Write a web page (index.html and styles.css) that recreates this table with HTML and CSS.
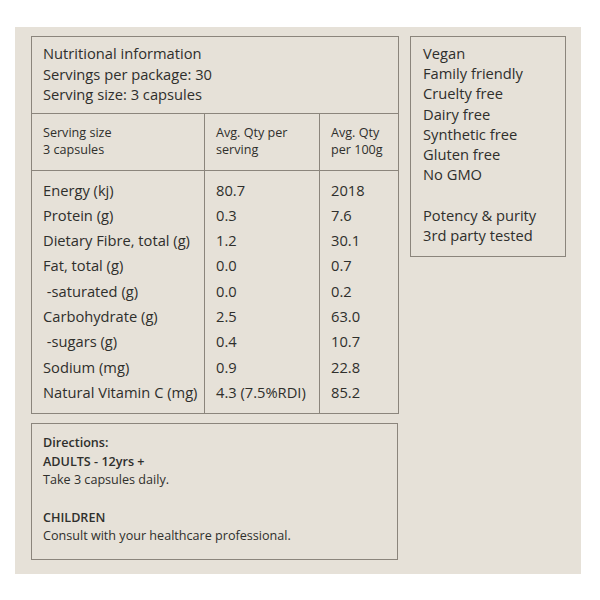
FILE: index.html
```html
<!DOCTYPE html>
<html>
<head>
<meta charset="utf-8">
<link rel="stylesheet" href="styles.css">
</head>
<body>
<div class="panel">
  <div class="top">
    <table class="nutri">
      <colgroup>
        <col class="c1"><col class="c2"><col class="c3">
      </colgroup>
      <tr class="head">
        <td colspan="3">Nutritional information<br>Servings per package: 30<br>Serving size: 3 capsules</td>
      </tr>
      <tr class="sub">
        <td>Serving size<br>3 capsules</td>
        <td>Avg. Qty per<br>serving</td>
        <td>Avg. Qty<br>per 100g</td>
      </tr>
      <tr class="row first"><td>Energy (kj)</td><td>80.7</td><td>2018</td></tr>
      <tr class="row"><td>Protein (g)</td><td>0.3</td><td>7.6</td></tr>
      <tr class="row"><td>Dietary Fibre, total (g)</td><td>1.2</td><td>30.1</td></tr>
      <tr class="row"><td>Fat, total (g)</td><td>0.0</td><td>0.7</td></tr>
      <tr class="row"><td>&nbsp;-saturated (g)</td><td>0.0</td><td>0.2</td></tr>
      <tr class="row"><td>Carbohydrate (g)</td><td>2.5</td><td>63.0</td></tr>
      <tr class="row"><td>&nbsp;-sugars (g)</td><td>0.4</td><td>10.7</td></tr>
      <tr class="row"><td>Sodium (mg)</td><td>0.9</td><td>22.8</td></tr>
      <tr class="row last"><td>Natural Vitamin C (mg)</td><td>4.3 (7.5%RDI)</td><td>85.2</td></tr>
    </table>
    <div class="side">
      <div>Vegan<br>Family friendly<br>Cruelty free<br>Dairy free<br>Synthetic free<br>Gluten free<br>No GMO</div>
      <div class="gapblock">Potency &amp; purity<br>3rd party tested</div>
    </div>
  </div>
  <div class="directions">
    <div class="b">Directions:</div>
    <div class="b">ADULTS - 12yrs +</div>
    <div>Take 3 capsules daily.</div>
    <div class="b spaced">CHILDREN</div>
    <div>Consult with your healthcare professional.</div>
  </div>
</div>
</body>
</html>
```
FILE: styles.css
```css
html, body {
  margin: 0;
  padding: 0;
  background: #ffffff;
}
body {
  font-family: "Open Sans", "Noto Sans", sans-serif;
  color: #2f2f2c;
}
.panel {
  box-sizing: border-box;
  width: 566px;
  margin: 27px 0 0 15px;
  padding: 9px 15px 14px 16px;
  background: #e6e1d8;
}
.top {
  display: flex;
  align-items: flex-start;
  gap: 11px;
}
.nutri {
  width: 367px;
  table-layout: fixed;
  border-collapse: collapse;
  border: 1px solid #8b857c;
}
.c1 { width: 173px; }
.c2 { width: 115px; }
.c3 { width: 79px; }
.nutri td {
  padding: 0 0 0 11px;
  border-left: 1px solid #8b857c;
  border-right: 1px solid #8b857c;
  vertical-align: top;
  white-space: nowrap;
}
.head td {
  font-size: 14.7px;
  line-height: 20.5px;
  padding-top: 6px;
  padding-bottom: 8px;
  border-bottom: 1px solid #8b857c;
}
.sub td {
  font-size: 12.6px;
  line-height: 17px;
  padding-top: 10px;
  padding-bottom: 12px;
  border-bottom: 1px solid #8b857c;
}
.row td {
  font-size: 14.7px;
  line-height: 25.3px;
}
.row.first td { padding-top: 7px; }
.row.last td { padding-bottom: 8px; }
.side {
  box-sizing: border-box;
  width: 157px;
  height: 221px;
  border: 1px solid #8b857c;
  padding: 6px 6px 11px 12px;
  font-size: 14.7px;
  line-height: 20.2px;
}
.gapblock { margin-top: 20.2px; }
.directions {
  box-sizing: border-box;
  width: 367px;
  height: 137px;
  margin-top: 9px;
  border: 1px solid #8b857c;
  padding: 10px 11px 12px 11px;
  font-size: 12.6px;
  line-height: 18.6px;
}
.b { font-weight: 600; }
.spaced { margin-top: 18.6px; }
```
